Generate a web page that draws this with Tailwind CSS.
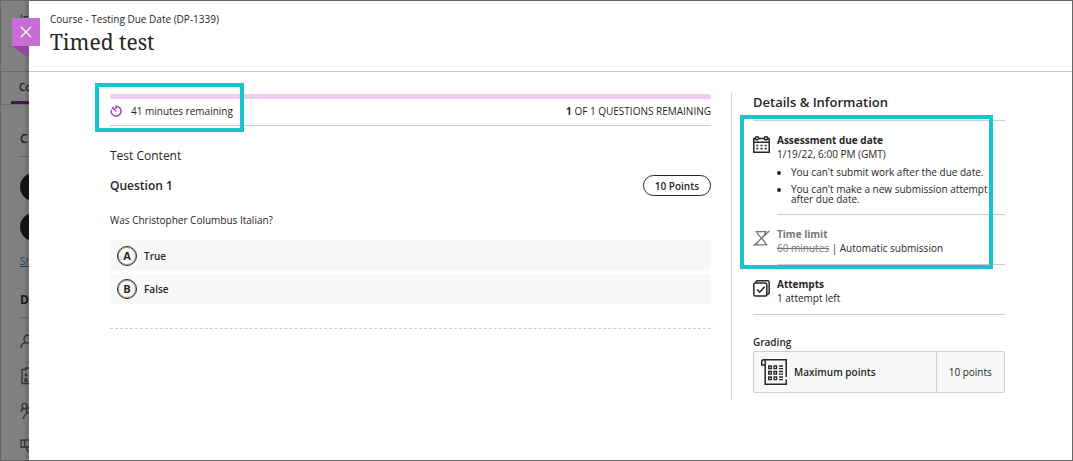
<!DOCTYPE html>
<html lang="en">
<head>
<meta charset="utf-8">
<meta name="viewport" content="width=device-width, initial-scale=1">
<title>Timed test</title>
<script src="https://cdn.jsdelivr.net/npm/@tailwindcss/browser@4"></script>
</head>
<body class="relative flex min-h-screen border border-[#666] bg-white font-['Open_Sans',sans-serif] text-[10px] leading-[14px] text-[#262626]">

  <!-- Dimmed course page behind the panel -->
  <aside class="relative w-7 shrink-0 overflow-hidden bg-[#808080] whitespace-nowrap text-[#1a1a1a]" aria-hidden="true">
    <div class="h-[71px] border-b border-[#696969] pt-2.5 pl-[19px]">In</div>
    <div class="ml-2.5 flex h-8 items-center border-b-3 border-[#4a1158] pl-2 text-[10px] font-semibold">Co</div>
    <div class="border-b border-[#6c6c6c]"></div>
    <div class="flex flex-col pl-[19px]">
      <div class="mt-[26px] h-[26px] border-b border-[#666] text-xs leading-4 font-semibold">C</div>
      <div class="mt-4 size-7 shrink-0 rounded-full bg-[#151515]"></div>
      <div class="mt-3 size-7 shrink-0 rounded-full bg-[#151515]"></div>
      <div class="mt-[13px] text-[10px] text-[#1d4a63] underline">Sh</div>
      <div class="mt-[24px] h-[26px] border-b border-[#666] text-xs leading-4 font-bold">D</div>
      <svg class="mt-4 size-4 shrink-0" viewBox="0 0 16 16" fill="none" stroke="#333" stroke-width="1.3"><circle cx="8" cy="5" r="4"/><path d="M1 14c0-3 2-5 5-5.500M10 9c3 1 5 3 5 5"/></svg>
      <svg class="mt-[17px] size-[18px] shrink-0" viewBox="0 0 18 18" fill="none" stroke="#333" stroke-width="1.3"><path d="M2 2.500h4V1h6v1.500h4v14H2zM5 7l2 2M5 9l2-2M5 12h2v2H5zM9 8h3M9 12h3"/></svg>
      <svg class="mt-[17px] size-[18px] shrink-0" viewBox="0 0 18 18" fill="none" stroke="#333" stroke-width="1.3"><circle cx="4.500" cy="4" r="2.600"/><circle cx="9" cy="8.500" r="2.600"/><path d="M1 10c0-2 1-3 3-3.500M3.500 17c0-3 2-5 4-6M11 11c3 0 5 3 5 6"/></svg>
      <svg class="mt-[18px] size-[18px] shrink-0" viewBox="0 0 18 18" fill="none" stroke="#333" stroke-width="1.3"><path d="M1 2h15v7H1zM4.500 2v7M6 9l2 4.500h2V9"/></svg>
    </div>
    <div class="absolute inset-y-0 right-0 w-1 bg-black/10"></div>
  </aside>

  <!-- Close tab overlapping the panel edge -->
  <div class="absolute top-[17px] left-[11px] size-7">
    <button type="button" aria-label="Close" class="flex size-7 items-center justify-center bg-[#c76dd6]">
      <svg class="size-3" viewBox="0 0 12 12" fill="none" stroke="#fff" stroke-width="1.2"><path d="M1 1l10 10M11 1L1 11"/></svg>
    </button>
    <svg class="absolute top-7 left-0 h-3 w-[17px]" viewBox="0 0 17 12"><path d="M0 0h17v12z" fill="#95479f"/></svg>
  </div>

  <div class="flex min-w-0 flex-1 flex-col">
    <header class="h-[71px] border-b border-[#c6c6c6] pt-[11px] pl-[21px]">
      <p>Course - Testing Due Date (DP-1339)</p>
      <h1 class="mt-0.5 font-['Noto_Serif','DejaVu_Serif_Condensed','DejaVu_Serif',serif] text-[21px] leading-7">Timed test</h1>
    </header>

    <div class="flex items-start pt-[21px] pr-[67px] pb-4 pl-[81px]">
      <main class="min-w-0 flex-1 pr-5">
        <section class="relative">
          <div class="mt-px h-[5px] rounded-full bg-[#eccff1]"></div>
          <div class="flex h-[27px] items-center border-b border-[#ccc] pb-[2px]">
            <svg class="size-3" viewBox="0 0 12 12" fill="none" stroke="#a93abd" stroke-width="1.5"><path d="M6 4V1.200A4.900 4.900 0 1 1 1.300 5"/><path d="M6.700 7L1.600 3.200l1.500-1.500z" fill="#a93abd" stroke-width=".5"/></svg>
            <p class="ml-[9px]">41 minutes remaining</p>
            <p class="ml-auto"><strong>1</strong> OF 1 QUESTIONS REMAINING</p>
          </div>
          <div class="pointer-events-none absolute -top-[11px] -left-[15px] h-[49px] w-[149px] border-4 border-[#19c4cc]"></div>
        </section>

        <h2 class="mt-[22px] text-xs leading-4">Test Content</h2>
        <div class="mt-[11px] flex items-center justify-between">
          <h3 class="text-xs leading-4 font-semibold">Question 1</h3>
          <span class="flex h-[21px] items-center rounded-full border border-[#262626] px-[11px] font-semibold">10 Points</span>
        </div>
        <p class="mt-[17px]">Was Christopher Columbus Italian?</p>
        <div class="mt-[13px] flex flex-col gap-[3px]">
          <button type="button" class="flex h-[31px] items-center gap-[7px] bg-[#f8f8f8] px-[7px] font-semibold">
            <span class="flex size-5 items-center justify-center rounded-full border border-[#262626] text-[11px] font-bold ring-1 ring-[#262626]/40 ring-inset">A</span>True
          </button>
          <button type="button" class="flex h-[30px] items-center gap-[7px] bg-[#f8f8f8] px-[7px] font-semibold">
            <span class="flex size-5 items-center justify-center rounded-full border border-[#262626] text-[11px] font-bold ring-1 ring-[#262626]/40 ring-inset">B</span>False
          </button>
        </div>
        <div class="mt-6 border-b border-dashed border-[#ccc]"></div>
      </main>

      <aside class="min-h-[307px] w-[274px] shrink-0 border-l border-[#d4d4d4] pl-[21px]">
        <h2 class="pt-px text-[13px] leading-4 font-semibold">Details &amp; Information</h2>
        <div class="relative mt-2.5 border-t border-[#ccc]">
          <section class="flex gap-[7px] pt-3">
            <svg class="mt-[3px] size-[17px] shrink-0" viewBox="0 0 17 17" fill="none" stroke="#262626" stroke-width="1.5"><path d="M2.500 2.500H.8v13.700h15.400V2.500h-1.700M5.500 2.500h6M1 6.200h15"/><rect x="2.500" y=".8" width="3" height="3" rx="1"/><rect x="11.500" y=".8" width="3" height="3" rx="1"/><path d="M3.300 9.500h2M7.500 9.500h2M11.700 9.500h2M3.300 12.700h2M7.500 12.700h2M11.700 12.700h2" stroke-width="1.700"/></svg>
            <div class="flex-1 border-b border-[#ccc] pb-[10px]">
              <h3 class="font-bold">Assessment due date</h3>
              <p>1/19/22, 6:00 PM (GMT)</p>
              <ul class="mt-1.5 list-disc space-y-[7px] pr-4 pl-[14px] leading-[10px]">
                <li>You can't submit work after the due date.</li>
                <li>You can't make a new submission attempt after due date.</li>
              </ul>
            </div>
          </section>
          <section class="flex gap-[7px] pt-3">
            <svg class="mt-[3px] size-[17px] shrink-0" viewBox="0 0 17 17" fill="none" stroke="#777" stroke-width="1.3"><path d="M2.500 1.700h11M2.500 14.800h12M4 1.700c0 4 8 8 9 13M12.500 1.700c0 5-8 8-9 13M.5 16L16.500 .7"/></svg>
            <div class="flex-1 border-b border-[#ccc] pb-[9px]">
              <h3 class="font-bold text-[#777]">Time limit</h3>
              <p><s class="text-[#777]">60 minutes</s> | Automatic submission</p>
            </div>
          </section>
          <section class="flex gap-[7px] border-b border-[#ccc] pt-3 pb-[9px]">
            <svg class="mt-[3px] size-[17px] shrink-0" viewBox="0 0 17 17" fill="none" stroke="#262626" stroke-width="1.500"><rect x=".8" y="3" width="13" height="13" rx="1.500"/><path d="M2.500 2.500L4 .8h10.500a1.700 1.700 0 0 1 1.700 1.700V13l-2 2M4 9.500l2.700 2.700 5-5.500"/></svg>
            <div>
              <h3 class="font-bold">Attempts</h3>
              <p>1 attempt left</p>
            </div>
          </section>
          <div class="pointer-events-none absolute -top-1.5 -left-[13px] h-[154px] w-[253px] border-4 border-[#19c4cc]"></div>
        </div>

        <h3 class="mt-5 font-semibold">Grading</h3>
        <div class="mt-[2px] rounded-xs border border-[#d0d0d0] bg-[#f8f8f8]">
          <table class="w-full">
            <tr>
              <th scope="row" class="h-10 pl-[7px] text-left font-semibold">
                <span class="flex items-center gap-[7px]">
                  <svg class="size-[26px]" viewBox="0 0 26 26" fill="none" stroke="#262626" stroke-width="1.500"><path d="M25.200 18V.8H2.500C1.200.8.700 1.800.700 3v3h3M4.200 1v24.200h21V20.500"/><path d="M7.700 7h2.600v2.600H7.700zM13 7h2.600v2.600H13zM7.700 12.500h2.600v2.600H7.700zM13 12.500h2.600v2.600H13zM7.700 18h2.600v2.600H7.700zM13 18h2.600v2.600H13zM18 7h4M18 9.600h4M18 12.500h4M18 15.100h4M18 18h4M18 20.600h4" stroke-width="1.300"/></svg>
                  Maximum points
                </span>
              </th>
              <td class="w-[68px] border-l border-[#d0d0d0] text-center">10 points</td>
            </tr>
          </table>
        </div>
      </aside>
    </div>
  </div>
</body>
</html>
